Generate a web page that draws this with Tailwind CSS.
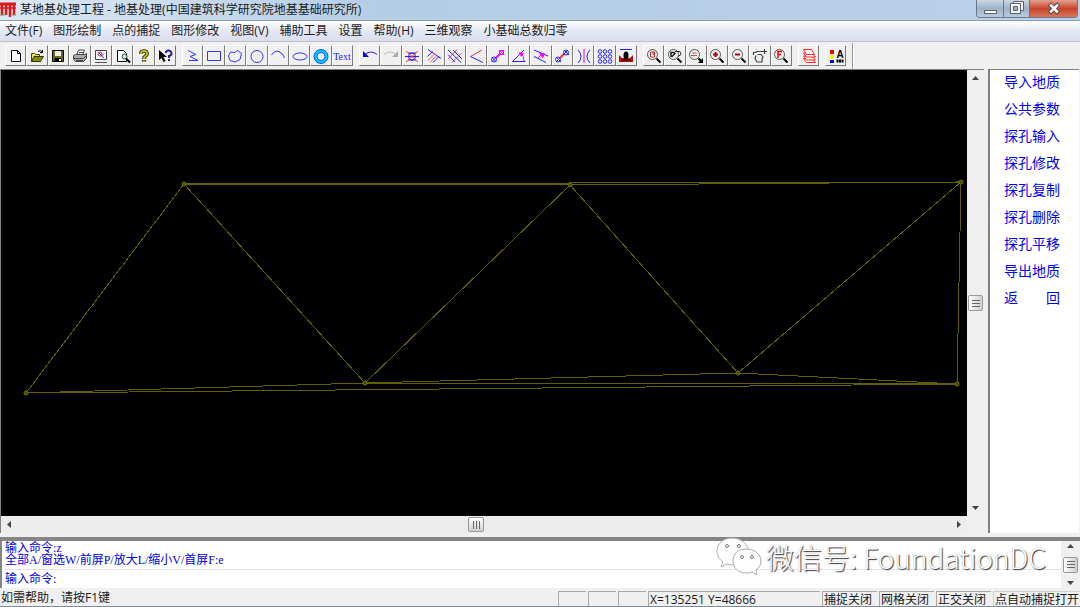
<!DOCTYPE html>
<html lang="zh-CN">
<head>
    <meta charset="UTF-8">
    <meta name="viewport" content="width=device-width, initial-scale=1.0">
    <title>某地基处理工程 - 地基处理</title>
    <script src="https://cdn.jsdelivr.net/npm/@tailwindcss/browser@4"></script>
</head>
<body class="h-screen flex flex-col overflow-hidden bg-[#f0f0f0] text-[12px] leading-4 text-[#1a1a1a] font-['Open_Sans','Noto_Sans_CJK_SC',sans-serif]">

    <!-- Title bar -->
    <header class="h-[21px] shrink-0 flex items-center border-b border-[#8a9bab] bg-linear-to-r from-[#dce8f3] via-[#b4cde6] via-35% to-[#b9d2e9]">
        <svg class="w-4 h-4 mr-1 shrink-0" viewBox="0 0 16 16" fill="none" stroke="#e01818" aria-hidden="true">
            <path d="M0 2h16" stroke-width="3" />
            <path d="M0 6h16" stroke-width="1.500" />
            <path d="M2 2v11M6 2v11M10 2v13M14 2v11" stroke-width="2.500" />
            <path d="M0 13h5M12 13h4" stroke="#6a9a6a" />
        </svg>
        <h1 class="flex-1 whitespace-nowrap">某地基处理工程 - 地基处理(中国建筑科学研究院地基基础研究所)</h1>
        <div class="self-start h-[18px] mr-[2px] flex rounded-b border border-t-0 border-[#65788b] overflow-hidden">
            <button aria-label="最小化" class="w-[27px] flex justify-center border-r border-[#65788b] bg-linear-to-b from-[#cbd7e3] via-[#9eb2c7] to-[#b8cbdf]">
                <svg class="w-[15px] h-[17px]" viewBox="0 0 15 17"><rect x="1.500" y="10.500" width="12" height="3" fill="#fff" stroke="#59616b" /></svg>
            </button>
            <button aria-label="还原" class="w-[26px] flex justify-center border-r border-[#65788b] bg-linear-to-b from-[#cbd7e3] via-[#9eb2c7] to-[#b8cbdf]">
                <svg class="w-[16px] h-[17px]" viewBox="0 0 16 17" fill="#f4f4f4" stroke="#59616b"><path d="M4.500 1.500h10v9h-10z" /><path d="M1.500 3.500h10v10h-10z" /><path fill="#9eb2c7" d="M4.500 6.500h4v4h-4z" /></svg>
            </button>
            <button aria-label="关闭" class="w-[47px] flex justify-center bg-linear-to-b from-[#e2a090] via-[#c8432c] to-[#d8765a]">
                <svg class="w-[14px] h-[17px]" viewBox="0 0 14 17" fill="none" stroke-linecap="square"><path d="M4 5.500l6 6M10 5.500l-6 6" stroke="#5a4a52" stroke-width="4.500" /><path d="M4 5.500l6 6M10 5.500l-6 6" stroke="#fff" stroke-width="2.500" /></svg>
            </button>
        </div>
    </header>

    <!-- Menu bar -->
    <nav class="h-[21px] shrink-0 flex items-center gap-[11px] px-[5px] border-b border-[#bfc0c8] bg-linear-to-b from-white via-[#e4e8f3] to-[#d9def0] whitespace-nowrap">
        <button>文件(F)</button>
        <button>图形绘制</button>
        <button>点的捕捉</button>
        <button>图形修改</button>
        <button>视图(V)</button>
        <button>辅助工具</button>
        <button>设置</button>
        <button>帮助(H)</button>
        <button>三维观察</button>
        <button>小基础总数归零</button>
    </nav>

    <!-- Toolbar -->
    <div id="toolbar" role="toolbar" aria-label="工具栏" class="h-[27px] shrink-0 flex items-center pl-[5px] gap-[6px]">
        <div class="flex w-[171px]" data-tools="new open save print preview find help what"></div>
        <div class="flex w-[171px]" data-tools="polyline rect polygon circle arc ellipse ring text"></div>
        <div class="flex w-[278px]" data-tools="undo redo snapoff parallel cross angle nodes slope perp link mirror array section"></div>
        <div class="flex w-[149px]" data-tools="zoomwin zoomprev zoomdyn zoomin zoomout pan zoomfull"></div>
        <div class="flex w-[21px]" data-tools="layers"></div>
        <div class="flex w-[21px]" data-tools="style"></div>
        <div class="w-px h-[26px] bg-[#999] shadow-[1px_0_0_#fff]"></div>
    </div>

    <!-- Drawing area and side menu -->
    <main class="flex-1 min-h-0 flex gap-1 pr-[1px]">
        <section class="flex-1 min-w-0 flex flex-col border-t border-l border-[#808080]">
            <div class="flex-1 min-h-0 flex">
                <div class="flex-1 min-w-0 bg-black overflow-hidden">
                    <svg class="w-full h-full" viewBox="0 0 966 446" preserveAspectRatio="xMinYMin" fill="none" stroke="#606000" role="img" aria-label="探孔三角网">
                        <g shape-rendering="crispEdges">
                            <path d="M25 323L183 114L569 115L960 112L956 314L25 323L364 313L956 314L737 303L364 313" />
                            <path d="M183 114L364 313L569 115L737 303L960 112L183 114" />
                        </g>
                        <g fill="#444400" stroke="#777700">
                            <circle cx="25" cy="323" r="2" />
                            <circle cx="183" cy="114" r="2" />
                            <circle cx="569" cy="115" r="2" />
                            <circle cx="960" cy="112" r="2" />
                            <circle cx="956" cy="314" r="2" />
                            <circle cx="737" cy="303" r="2" />
                            <circle cx="364" cy="313" r="2" />
                        </g>
                    </svg>
                </div>
                <div class="w-[17px] flex flex-col items-center justify-between py-[6px] bg-[#efefef]">
                    <svg class="w-[7px] h-[5px]" viewBox="0 0 7 5"><path d="M0 4l3.500-4L7 4z" fill="#444" /></svg>
                    <div class="w-[15px] h-4 mt-[20px] rounded-xs border border-[#999] bg-linear-to-r from-white to-[#cfcfcf] flex flex-col items-center justify-center gap-[2px]">
                        <i class="w-2 h-px bg-[#666]"></i><i class="w-2 h-px bg-[#666]"></i><i class="w-2 h-px bg-[#666]"></i>
                    </div>
                    <svg class="w-[7px] h-[5px]" viewBox="0 0 7 5"><path d="M0 1l3.500 4L7 1z" fill="#444" /></svg>
                </div>
            </div>
            <div class="h-[17px] mr-[17px] flex items-center justify-between px-[6px] bg-[#ececec]">
                <svg class="w-[5px] h-[7px]" viewBox="0 0 5 7"><path d="M4 0L0 3.500L4 7z" fill="#444" /></svg>
                <div class="w-4 h-[15px] mr-[16px] rounded-xs border border-[#999] bg-linear-to-b from-white to-[#cfcfcf] flex items-center justify-center gap-[2px]">
                    <i class="w-px h-2 bg-[#666]"></i><i class="w-px h-2 bg-[#666]"></i><i class="w-px h-2 bg-[#666]"></i>
                </div>
                <svg class="w-[5px] h-[7px]" viewBox="0 0 5 7"><path d="M1 0l4 3.500L1 7z" fill="#444" /></svg>
            </div>
        </section>
        <aside class="w-[91px] flex flex-col items-start pl-[14px] bg-white border-t border-l-2 border-[#808080] text-[14px] leading-5 text-[#0000f0] font-['Noto_Sans_CJK_SC',sans-serif]">
            <button class="h-[27px] pb-[5px]">导入地质</button>
            <button class="h-[27px] pb-[5px]">公共参数</button>
            <button class="h-[27px] pb-[5px]">探孔输入</button>
            <button class="h-[27px] pb-[5px]">探孔修改</button>
            <button class="h-[27px] pb-[5px]">探孔复制</button>
            <button class="h-[27px] pb-[5px]">探孔删除</button>
            <button class="h-[27px] pb-[5px]">探孔平移</button>
            <button class="h-[27px] pb-[5px]">导出地质</button>
            <button class="h-[27px] pb-[5px] w-[56px] flex items-center justify-between"><span>返</span><span>回</span></button>
        </aside>
    </main>

    <!-- Command line -->
    <section class="relative h-[51px] mt-1 shrink-0 flex border-t-4 border-l-2 border-[#858585] bg-white text-[#0000e0] font-['Liberation_Serif','Noto_Sans_CJK_SC',serif]">
        <div class="flex-1 flex flex-col pl-[3px]">
            <div class="flex-1 pt-[1px] leading-[12px]">
                <p>输入命令:z</p>
                <p>全部A/窗选W/前屏P/放大L/缩小V/首屏F:e</p>
            </div>
            <div class="h-[19px] flex items-center border-t border-[#e2e2e2]">
                <label for="cmd">输入命令:</label>
                <input id="cmd" type="text" class="flex-1 min-w-0 h-4 outline-none">
            </div>
        </div>
        <div class="w-[19px] flex flex-col items-center justify-between py-[3px] bg-[#efefef]">
            <svg class="w-[7px] h-[5px]" viewBox="0 0 7 5"><path d="M0 4l3.500-4L7 4z" fill="#444" /></svg>
            <div class="w-[15px] h-4 rounded-xs border border-[#999] bg-linear-to-r from-white to-[#cfcfcf] flex flex-col items-center justify-center gap-[2px]">
                <i class="w-2 h-px bg-[#666]"></i><i class="w-2 h-px bg-[#666]"></i><i class="w-2 h-px bg-[#666]"></i>
            </div>
            <svg class="w-[7px] h-[5px]" viewBox="0 0 7 5"><path d="M0 1l3.500 4L7 1z" fill="#444" /></svg>
        </div>

        <!-- Watermark -->
        <div class="absolute right-[34px] -top-[5px] flex items-center gap-1 pointer-events-none">
            <svg class="w-[46px] h-[42px]" viewBox="0 0 46 42" fill="#fff" stroke="#aaa" aria-hidden="true">
                <path d="M16 2C7 2 1 8 1 15c0 5 2 8 6 11l-2 5 6-3c3 1 6 1 9 1 8-1 13-6 13-13C32 8 25 2 16 2z" />
                <path d="M30 13c-8 0-13 5-13 12s6 12 13 12c2 0 4 0 6-1l5 3-1-5c3-2 5-5 5-9 0-7-7-12-15-12z" />
                <g stroke="#777"><circle cx="11" cy="10" r="1.500" /><circle cx="23" cy="10" r="1.500" /><circle cx="26" cy="21" r="1.500" /><circle cx="36" cy="21" r="1.500" /></g>
            </svg>
            <span class="text-[28px] leading-[42px] font-light whitespace-nowrap text-white font-['Noto_Sans_CJK_SC',sans-serif] [text-shadow:1px_1px_1px_#333,0_0_1px_#aaa]">微信号: FoundationDC</span>
        </div>
    </section>

    <!-- Status bar -->
    <footer class="h-[19px] shrink-0 flex items-end gap-[2px] border-b border-[#7e8b99] whitespace-nowrap">
        <p class="flex-1 pl-[1px]">如需帮助，请按F1键</p>
        <div class="w-7 h-[15px] border-t border-l border-[#a8a8a8]"></div>
        <div class="w-7 h-[15px] border-t border-l border-[#a8a8a8]"></div>
        <div class="w-7 h-[15px] border-t border-l border-[#a8a8a8]"></div>
        <div class="w-[172px] h-[15px] pl-[1px] border-t border-l border-[#a8a8a8]">X=135251 Y=48666</div>
        <div class="w-[55px] h-[15px] pl-[1px] border-t border-l border-[#a8a8a8]">捕捉关闭</div>
        <div class="w-[55px] h-[15px] pl-[1px] border-t border-l border-[#a8a8a8]">网格关闭</div>
        <div class="w-[55px] h-[15px] pl-[1px] border-t border-l border-[#a8a8a8]">正交关闭</div>
        <div class="w-[87px] h-[15px] pl-[1px] border-t border-l border-[#d0d0d0]">点自动捕捉打开</div>
    </footer>

    <script>
        // Shared magnifier body
        const lens = '<circle cx="7.500" cy="7.500" r="5" stroke="#555"/><path d="M11.500 11.500l4 4" stroke="#000" stroke-width="2"/>';

        // name: [label, drawing on an 18x18 grid]
        const icons = {
            new: ["新建", '<path d="M4.500 3.500h6l3 3v8h-9z" fill="#fff" stroke="#000"/><path d="M10.500 3.500v3h3" stroke="#000"/>'],
            open: ["打开", '<path d="M3.500 14.500v-8h3l1 1h4v2" fill="#e8e070" stroke="#444400"/><path d="M3.500 14.500l2.500-5h9.500l-3 5z" fill="#8a8a10" stroke="#333300"/><path d="M10 4.500q2.500-2 4.500 1M14.500 3v2.500H12" stroke="#000"/>'],
            save: ["保存", '<path d="M3.500 3.500h11v11h-11z" fill="#6b6b10" stroke="#000"/><path d="M6 4h6v5H6z" fill="#eee"/><path d="M5.500 11h7v4h-7z" fill="#000"/><path d="M10 12h2v2h-2z" fill="#fff"/>'],
            print: ["打印", '<path d="M5.500 8l2-5h6l-2 5" fill="#fff" stroke="#444"/><path d="M2.500 8.500l2-1h9l2-1v5l-3 3h-8l-2-2z" fill="#aaa" stroke="#444"/><path d="M3 11.500h9.500l3-3M5 13.500h7M8 5.500h4" stroke="#444"/>'],
            preview: ["图形预览", '<path d="M3.500 3.500h11v9h-11z" fill="#fff" stroke="#444"/><path d="M3 15.500h12" stroke="#555"/><circle cx="8" cy="7" r="2" stroke="#d22"/><path d="M6 5l6 6M9 9.500l3-3" stroke="#33f"/>'],
            find: ["打印预览", '<path d="M3.500 3.500h6l3 3v8h-9z" fill="#fff" stroke="#000"/><circle cx="10.500" cy="9.500" r="2.500" fill="#aee" stroke="#444"/><path d="M12 11.500l4 4" stroke="#000" stroke-width="2"/>'],
            help: ["帮助", '<path d="M6 7V5.500Q6.500 4 9 4t3 2-1.500 3L9 10.500V12M9 13v2" stroke="#222" stroke-width="3.500"/><path d="M6 7V5.500Q6.500 4 9 4t3 2-1.500 3L9 10.500V12M9 13.500v1.500" stroke="#c8c800" stroke-width="1.800"/>'],
            what: ["这是什么", '<path d="M3 3v10l2.500-2 2 4 2-1-2-4H11z" fill="#000"/><path d="M10 6V5q1-2 3-1.500T15.500 6 13 9v2M13 12v2" stroke="#202090" stroke-width="2"/>'],
            polyline: ["折线", '<path d="M4 3.500l8 4L6 9.500l8 4H5" stroke="#33f"/>'],
            rect: ["矩形", '<path d="M2.500 4.500h13v9h-13z" stroke="#33f"/>'],
            polygon: ["多边形", '<path d="M2.500 9l2-4 4 .5 3-2 4 3-1.500 6-5 2.500-5-1.500z" stroke="#33f"/>'],
            circle: ["圆", '<circle cx="9" cy="9.500" r="6" stroke="#33f"/>'],
            arc: ["圆弧", '<path d="M2.500 8Q6 3 10 4.500T15.500 11" stroke="#33f"/>'],
            ellipse: ["椭圆", '<ellipse cx="9" cy="9.500" rx="7" ry="3.500" stroke="#33f"/>'],
            ring: ["圆环", '<circle cx="9" cy="9.500" r="5.500" stroke="#0cf" stroke-width="3"/><circle cx="9" cy="9.500" r="7" stroke="#15e"/><circle cx="9" cy="9.500" r="4" stroke="#15e"/>'],
            text: ["文字", '<text x="9" y="13" text-anchor="middle" font-family="Liberation Serif" font-size="10" fill="#22f">Text</text>'],
            undo: ["撤销", '<path d="M2 4v6h6z" fill="#00e"/><path d="M4 7.500q6-5 12 0" stroke="#22f"/>'],
            redo: ["重做", '<path d="M16 4v6h-6z" fill="#aaa"/><path d="M14 7.500Q8 2.500 2 7.500" stroke="#bbb"/>'],
            snapoff: ["取消捕捉", '<circle cx="9" cy="9.500" r="3.500" stroke="#22f"/><path d="M2 9.500h14M5 6h8M5 13h8" stroke="#22f"/><path d="M3 4l12 11M15 4L3 15" stroke="#f33"/>'],
            parallel: ["平行", '<path d="M3 2.500l13 9" stroke="#22f"/><path d="M2.500 9.500l5-5M8 15.500l6-6" stroke="#22f"/><path d="M3 13.500l7-7M5 15.500l7-7" stroke="#f55"/>'],
            cross: ["交点", '<path d="M2 12L11 2.500M6 15.500L15.500 6" stroke="#f44"/><path d="M2 3l13 12.500M7 3l9 9M2 7.500l7 7.500" stroke="#22f"/>'],
            angle: ["角度", '<path d="M14 3L2.500 9.500" stroke="#f33"/><path d="M2.500 9.500L15 15.500" stroke="#22f"/>'],
            nodes: ["两点", '<path d="M7 11l4-4" stroke="#f0f" stroke-width="2"/><circle cx="5" cy="12.500" r="2.500" stroke="#22f"/><path d="M3 10.500l4 4M7 10.500l-4 4" stroke="#22f"/><path d="M10.500 3.500h4v4h-4zM10 3l5 5M10 8l5-5" stroke="#f0f"/>'],
            slope: ["斜角", '<path d="M14 3L2.500 14.500h13" stroke="#22f"/><path d="M11 6q3 3 3 8" stroke="#f0f"/><path d="M9 5l5 1-3 4z" fill="#f0f"/>'],
            perp: ["垂足", '<path d="M2 3l14 6M2 9.500l12 6" stroke="#22f"/><path d="M5 12l5-5" stroke="#f0f"/><path d="M7 6l6 .5-2 5z" fill="#f0f"/>'],
            link: ["连接", '<circle cx="5" cy="12.500" r="2.500" stroke="#22f"/><path d="M3 10l5 5M8 10l-5 5" stroke="#22f"/><path d="M7 11l4-4" stroke="#f33" stroke-width="2"/><circle cx="13" cy="5.500" r="2.500" stroke="#22f"/><path d="M11 3l5 5M15 3l-5 5" stroke="#22f"/>'],
            mirror: ["镜像", '<path d="M3 3q3 3 3 6.500T3 16M15 3q-3 3-3 6.500t3 6.500" stroke="#22f"/><path d="M9 2v14" stroke="#f4f" stroke-width="1.500"/>'],
            array: ["阵列", '<g stroke="#22f"><circle cx="4" cy="4.500" r="1.800"/><circle cx="9" cy="4.500" r="1.800"/><circle cx="14" cy="4.500" r="1.800"/><circle cx="4" cy="9.500" r="1.800"/><circle cx="9" cy="9.500" r="1.800"/><circle cx="14" cy="9.500" r="1.800"/><circle cx="4" cy="14.500" r="1.800"/><circle cx="9" cy="14.500" r="1.800"/><circle cx="14" cy="14.500" r="1.800"/></g>'],
            section: ["剖面", '<path d="M3 2.500h12" stroke="#22f"/><path d="M2 8l3 3h8l3-3v7H2z" fill="#b01010"/><ellipse cx="9" cy="8.500" rx="2.500" ry="4" fill="#000"/><path d="M4 13h10" stroke="#300"/>'],
            zoomwin: ["窗口放大", lens + '<path d="M5.500 5h4v5h-4zM8 5v2.500h1.500" stroke="#b33"/>'],
            zoomprev: ["前屏", lens + '<path d="M5 10V5.500h4M5.500 10l4-4" stroke="#222" stroke-width="1.500"/><path d="M9 4.500h5l1 3-3 2" stroke="#333"/>'],
            zoomdyn: ["动态缩放", lens + '<path d="M4 8.500h6M5.500 6h4" stroke="#c55"/><path d="M16 11v5h-5z" fill="#000"/>'],
            zoomin: ["放大", lens + '<path d="M5 7.500h5M7.500 5v5" stroke="#b00" stroke-width="2"/>'],
            zoomout: ["缩小", lens + '<path d="M5 7.500h5" stroke="#b00" stroke-width="2"/>'],
            pan: ["平移", '<path d="M2.500 8V5.500h2L6 4.500h5M5 8.500l-1 3 2 3.500h5v-3l1-2-2-2.500H6.500M9 4.500h7M13.500 2v5" stroke="#444" stroke-width="1.200"/>'],
            zoomfull: ["全屏", lens + '<path d="M6 11V4.500h4M6 7.500h3" stroke="#e00" stroke-width="1.500"/>'],
            layers: ["图层", '<g fill="#fff" stroke="#f22"><path d="M3.500 11.500h8l4 4h-9z"/><path d="M3.500 9h8l4 4h-9z"/><path d="M3.500 6h8l4 4h-9z"/><path d="M3.500 2.500h8l3 5h-8z"/></g>'],
            style: ["颜色样式", '<path d="M3 3h4v4H3z" fill="#e00"/><path d="M3 8h4v4H3z" fill="#fe0"/><path d="M3 13h4v3H3z" fill="#00e"/><text x="13" y="11" text-anchor="middle" font-family="Liberation Sans" font-weight="bold" font-size="10" fill="#000">A</text><path d="M9.500 14h7" stroke="#000" stroke-width="3" stroke-dasharray="2 .5"/>']
        };

        document.querySelectorAll("[data-tools]").forEach(group => {
            group.dataset.tools.split(" ").forEach(name => {
                const [label, drawing] = icons[name];
                group.insertAdjacentHTML("beforeend", `
                    <button title="${label}" aria-label="${label}" class="flex-1 h-[21px] flex items-center justify-center border border-t-white border-l-white border-r-[#7a7a7a] border-b-[#7a7a7a] bg-[#f0f0f0]">
                        <svg class="w-[18px] h-[18px] shrink-0" viewBox="0 0 18 18" fill="none">${drawing}</svg>
                    </button>`);
            });
        });
    </script>
</body>
</html>
